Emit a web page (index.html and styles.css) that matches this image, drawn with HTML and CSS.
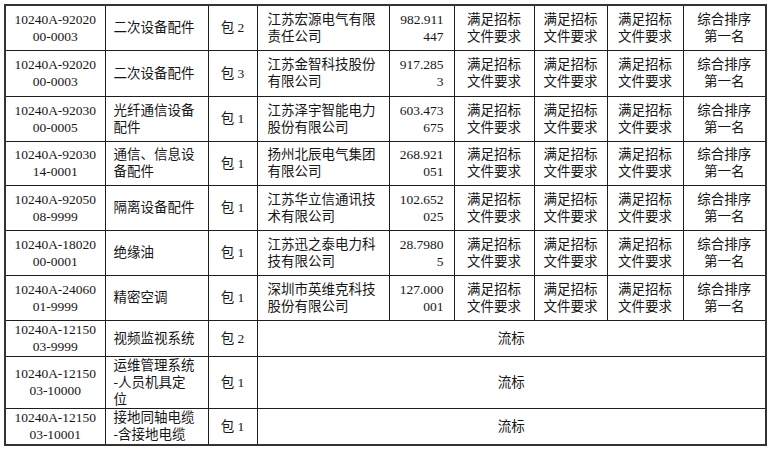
FILE: index.html
```html
<!DOCTYPE html>
<html lang="zh">
<head>
<meta charset="utf-8">
<link rel="stylesheet" href="styles.css">
</head>
<body>
<table class="grid">
  <colgroup>
    <col class="c1"><col class="c2"><col class="c3"><col class="c4"><col class="c5"><col class="c6"><col class="c7"><col class="c8"><col class="c9">
  </colgroup>
  <tbody>
    <tr class="r45">
      <td class="ctr">10240A-92020<br>00-0003</td>
      <td class="name">二次设备配件</td>
      <td class="ctr">包 2</td>
      <td class="co">江苏宏源电气有限<br>责任公司</td>
      <td class="num">982.911<br>447</td>
      <td class="ctr">满足招标<br>文件要求</td>
      <td class="ctr">满足招标<br>文件要求</td>
      <td class="ctr">满足招标<br>文件要求</td>
      <td class="ctr">综合排序<br>第一名</td>
    </tr>
    <tr class="r46">
      <td class="ctr">10240A-92020<br>00-0003</td>
      <td class="name">二次设备配件</td>
      <td class="ctr">包 3</td>
      <td class="co">江苏金智科技股份<br>有限公司</td>
      <td class="num">917.285<br>3</td>
      <td class="ctr">满足招标<br>文件要求</td>
      <td class="ctr">满足招标<br>文件要求</td>
      <td class="ctr">满足招标<br>文件要求</td>
      <td class="ctr">综合排序<br>第一名</td>
    </tr>
    <tr class="r45">
      <td class="ctr">10240A-92030<br>00-0005</td>
      <td class="name">光纤通信设备<br>配件</td>
      <td class="ctr">包 1</td>
      <td class="co">江苏泽宇智能电力<br>股份有限公司</td>
      <td class="num">603.473<br>675</td>
      <td class="ctr">满足招标<br>文件要求</td>
      <td class="ctr">满足招标<br>文件要求</td>
      <td class="ctr">满足招标<br>文件要求</td>
      <td class="ctr">综合排序<br>第一名</td>
    </tr>
    <tr class="r44">
      <td class="ctr">10240A-92030<br>14-0001</td>
      <td class="name">通信、信息设<br>备配件</td>
      <td class="ctr">包 1</td>
      <td class="co">扬州北辰电气集团<br>有限公司</td>
      <td class="num">268.921<br>051</td>
      <td class="ctr">满足招标<br>文件要求</td>
      <td class="ctr">满足招标<br>文件要求</td>
      <td class="ctr">满足招标<br>文件要求</td>
      <td class="ctr">综合排序<br>第一名</td>
    </tr>
    <tr class="r45">
      <td class="ctr">10240A-92050<br>08-9999</td>
      <td class="name">隔离设备配件</td>
      <td class="ctr">包 1</td>
      <td class="co">江苏华立信通讯技<br>术有限公司</td>
      <td class="num">102.652<br>025</td>
      <td class="ctr">满足招标<br>文件要求</td>
      <td class="ctr">满足招标<br>文件要求</td>
      <td class="ctr">满足招标<br>文件要求</td>
      <td class="ctr">综合排序<br>第一名</td>
    </tr>
    <tr class="r45">
      <td class="ctr">10240A-18020<br>00-0001</td>
      <td class="name">绝缘油</td>
      <td class="ctr">包 1</td>
      <td class="co">江苏迅之泰电力科<br>技有限公司</td>
      <td class="num">28.7980<br>5</td>
      <td class="ctr">满足招标<br>文件要求</td>
      <td class="ctr">满足招标<br>文件要求</td>
      <td class="ctr">满足招标<br>文件要求</td>
      <td class="ctr">综合排序<br>第一名</td>
    </tr>
    <tr class="r45">
      <td class="ctr">10240A-24060<br>01-9999</td>
      <td class="name">精密空调</td>
      <td class="ctr">包 1</td>
      <td class="co">深圳市英维克科技<br>股份有限公司</td>
      <td class="num">127.000<br>001</td>
      <td class="ctr">满足招标<br>文件要求</td>
      <td class="ctr">满足招标<br>文件要求</td>
      <td class="ctr">满足招标<br>文件要求</td>
      <td class="ctr">综合排序<br>第一名</td>
    </tr>
    <tr class="r36">
      <td class="ctr">10240A-12150<br>03-9999</td>
      <td class="name">视频监视系统</td>
      <td class="ctr">包 2</td>
      <td class="ctr" colspan="6">流标</td>
    </tr>
    <tr class="r52">
      <td class="ctr">10240A-12150<br>03-10000</td>
      <td class="name">运维管理系统<br>-人员机具定<br>位</td>
      <td class="ctr">包 1</td>
      <td class="ctr" colspan="6">流标</td>
    </tr>
    <tr class="r37">
      <td class="ctr">10240A-12150<br>03-10001</td>
      <td class="name">接地同轴电缆<br>-含接地电缆</td>
      <td class="ctr">包 1</td>
      <td class="ctr" colspan="6">流标</td>
    </tr>
  </tbody>
</table>
</body>
</html>
```

FILE: styles.css
```css
html, body {
  margin: 0;
  padding: 0;
  background: #ffffff;
}

body {
  padding: 4px 3px 0 4px;
  font-family: "Liberation Serif", "Noto Sans CJK SC", serif;
  font-size: 13.5px;
  color: #161616;
}

.grid {
  border-collapse: collapse;
  table-layout: fixed;
  width: 761px;
  border: 2px solid #333333;
}

.c1 { width: 100px; }
.c2 { width: 103px; }
.c3 { width: 49px; }
.c4 { width: 132px; }
.c5 { width: 65px; }
.c6 { width: 80px; }
.c7 { width: 73px; }
.c8 { width: 76px; }
.c9 { width: 83px; }

.grid td {
  border: 1px solid #1e1e1e;
  padding: 0;
  line-height: 17px;
  vertical-align: middle;
  white-space: nowrap;
  overflow: hidden;
}

.r45 { height: 45px; }
.r46 { height: 46px; }
.r44 { height: 44px; }
.r36 { height: 36px; }
.r52 { height: 52px; }
.r37 { height: 37px; }

.grid td.ctr { text-align: center; }
.grid td.name { text-align: left; padding-left: 8px; }
.grid td.co { text-align: left; padding-left: 10px; }
.grid td.num { text-align: right; padding-right: 10px; }
```
